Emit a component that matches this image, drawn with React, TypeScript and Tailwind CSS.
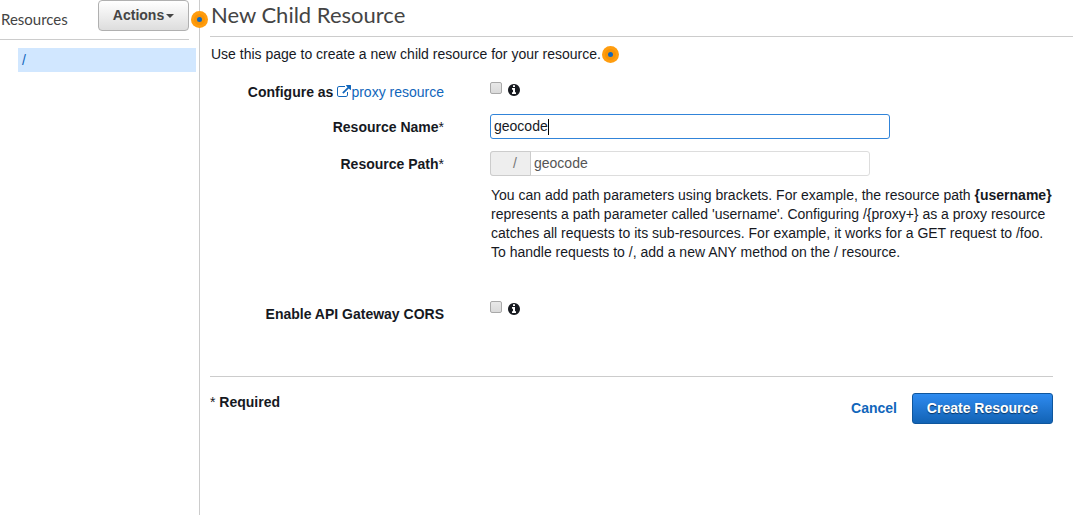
import React from "react";

function InfoIcon() {
  return (
    <svg viewBox="0 128 1536 1536" className="h-3 w-3 fill-[#16191f]">
      <path d="M1024 1376v-160q0-14-9-23t-23-9h-96v-512q0-14-9-23t-23-9h-320q-14 0-23 9t-9 23v160q0 14 9 23t23 9h96v320h-96q-14 0-23 9t-9 23v160q0 14 9 23t23 9h448q14 0 23-9t9-23zm-128-896v-160q0-14-9-23t-23-9h-192q-14 0-23 9t-9 23v160q0 14 9 23t23 9h192q14 0 23-9t9-23zm640 416q0 209-103 385.5t-279.5 279.5-385.5 103-385.5-103-279.5-279.5-103-385.5 103-385.5 279.5-279.5 385.5-103 385.5 103 279.5 279.5 103 385.5z" />
    </svg>
  );
}

function ExternalLinkIcon() {
  return (
    <svg viewBox="0 0 1792 1792" className="mt-[2px] h-[14px] w-[14px] fill-[#1166bb]">
      <path d="M1408 928v320q0 119-84.5 203.5t-203.5 84.5h-832q-119 0-203.5-84.5t-84.5-203.5v-832q0-119 84.5-203.5t203.5-84.5h704q14 0 23 9t9 23v64q0 14-9 23t-23 9h-704q-66 0-113 47t-47 113v832q0 66 47 113t113 47h832q66 0 113-47t47-113v-320q0-14 9-23t23-9h64q14 0 23 9t9 23zm384-864v512q0 26-19 45t-45 19-45-19l-176-176-652 652q-10 10-23 10t-23-10l-114-114q-10-10-10-23t10-23l652-652-176-176q-19-19-19-45t19-45 45-19h512q26 0 45 19t19 45z" />
    </svg>
  );
}

function Hotspot() {
  return (
    <span className="flex h-[17px] w-[17px] items-center justify-center rounded-full bg-[#ff9d0f]">
      <span className="flex h-[11px] w-[11px] items-center justify-center rounded-full bg-[#f89406]">
        <span className="h-[5px] w-[5px] rounded-full bg-[#1166bb]" />
      </span>
    </span>
  );
}

function CheckboxWithInfo() {
  return (
    <div className="flex h-[19px] items-start gap-[6px]">
      <button
        role="checkbox"
        aria-checked={false}
        className="h-3 w-3 rounded-[2px] border border-[#a9a9a9] bg-linear-to-b from-[#e8e8e8] to-[#dadada]"
      />
      <span className="pt-[2px]">
        <InfoIcon />
      </span>
    </div>
  );
}

function Row({ label, className, children }: { label: React.ReactNode; className: string; children: React.ReactNode }) {
  return (
    <div className={`flex items-start ${className}`}>
      <div className="mr-[46px] flex w-[234px] shrink-0 justify-end pt-1 leading-[19px] font-bold whitespace-nowrap">
        {label}
      </div>
      {children}
    </div>
  );
}

export default function App() {
  return (
    <div className="flex h-[515px] w-[1073px] overflow-hidden bg-white font-['Liberation_Sans',Arial,sans-serif] text-[14px] leading-[19px] text-[#16191f]">
      <aside className="w-[200px] shrink-0 border-r border-[#cccccc]">
        <div className="mr-[10px] flex h-10 items-start justify-between border-b border-[#cccccc]">
          <span className="pt-[10px] pl-px font-[Lato,sans-serif] text-[15px] text-[#444444]">Resources</span>
          <button className="flex h-[31px] w-[91px] items-center justify-center gap-[2px] rounded-[4px] border border-[#b0b0b0] bg-linear-to-b from-white to-[#dddddd] font-bold text-[#444444]">
            <span>Actions</span>
            <svg viewBox="0 0 8 4" className="h-1 w-2 fill-[#444444]">
              <path d="M0 0h8L4 4z" />
            </svg>
          </button>
        </div>
        <div className="mt-2 mr-[3px] ml-[18px] h-6 bg-[#d1e7ff] pl-1 leading-6 text-[#1166bb]">/</div>
      </aside>

      <main className="relative min-w-0 flex-1">
        <span className="absolute top-[11px] -left-[9px]">
          <Hotspot />
        </span>
        <h1 className="ml-[10px] h-[37px] border-b border-[#cccccc] pl-px font-[Lato,sans-serif] text-[22px] leading-[30px] text-[#444444]">
          New Child Resource
        </h1>
        <p className="flex h-[35px] items-center pl-[11px]">
          <span>Use this page to create a new child resource for your resource.</span>
          <span className="ml-px">
            <Hotspot />
          </span>
        </p>

        <form className="pl-[10px]" onSubmit={(e) => e.preventDefault()}>
          <Row
            className="h-[42px] pt-[7px]"
            label={
              <>
                <span>Configure as</span>
                <a className="ml-1 flex font-normal text-[#1166bb]">
                  <ExternalLinkIcon />
                  proxy resource
                </a>
              </>
            }
          >
            <div className="pt-[3px]">
              <CheckboxWithInfo />
            </div>
          </Row>
          <Row
            className="h-[37px]"
            label={
              <>
                Resource Name<span className="font-normal">*</span>
              </>
            }
          >
            <div className="flex h-[25px] w-[400px] items-center rounded-[3px] border border-[#3184d9] pl-[3px]">
              <span>geocode</span>
              <span className="h-4 w-px bg-black" />
            </div>
          </Row>
          <Row
            className="h-[35px]"
            label={
              <>
                Resource Path<span className="font-normal">*</span>
              </>
            }
          >
            <div className="flex h-[25px] w-[380px] items-center rounded-[3px] border border-[#dddddd] text-[#555555]">
              <span className="-my-px -ml-px flex h-[25px] w-[41px] items-center rounded-l-[3px] border border-[#cccccc] bg-[#eeeeee] pl-[22px] text-[#777777]">
                /
              </span>
              <span className="pl-[3px]">geocode</span>
            </div>
          </Row>
          <p className="ml-[280px] h-[115px] pl-px leading-[19px] whitespace-nowrap">
            You can add path parameters using brackets. For example, the resource path <b>{"{username}"}</b>
            <br />
            represents a path parameter called 'username'. Configuring /{"{proxy+}"} as a proxy resource
            <br />
            catches all requests to its sub-resources. For example, it works for a GET request to /foo.
            <br />
            To handle requests to /, add a new ANY method on the / resource.
          </p>
          <Row className="h-[75px]" label="Enable API Gateway CORS">
            <CheckboxWithInfo />
          </Row>
          <footer className="mr-5 flex items-start justify-between border-t border-[#cccccc] pt-4">
            <span className="font-bold">
              <span className="font-normal">*</span> Required
            </span>
            <div className="flex items-center gap-[15px] font-bold">
              <button className="text-[#1166bb]">Cancel</button>
              <button className="h-[31px] w-[141px] rounded-[3px] border border-[#0f569d] bg-linear-to-b from-[#2e8bf0] to-[#1263b5] text-white [text-shadow:0_1px_1px_#0a3562]">
                Create Resource
              </button>
            </div>
          </footer>
        </form>
      </main>
    </div>
  );
}
